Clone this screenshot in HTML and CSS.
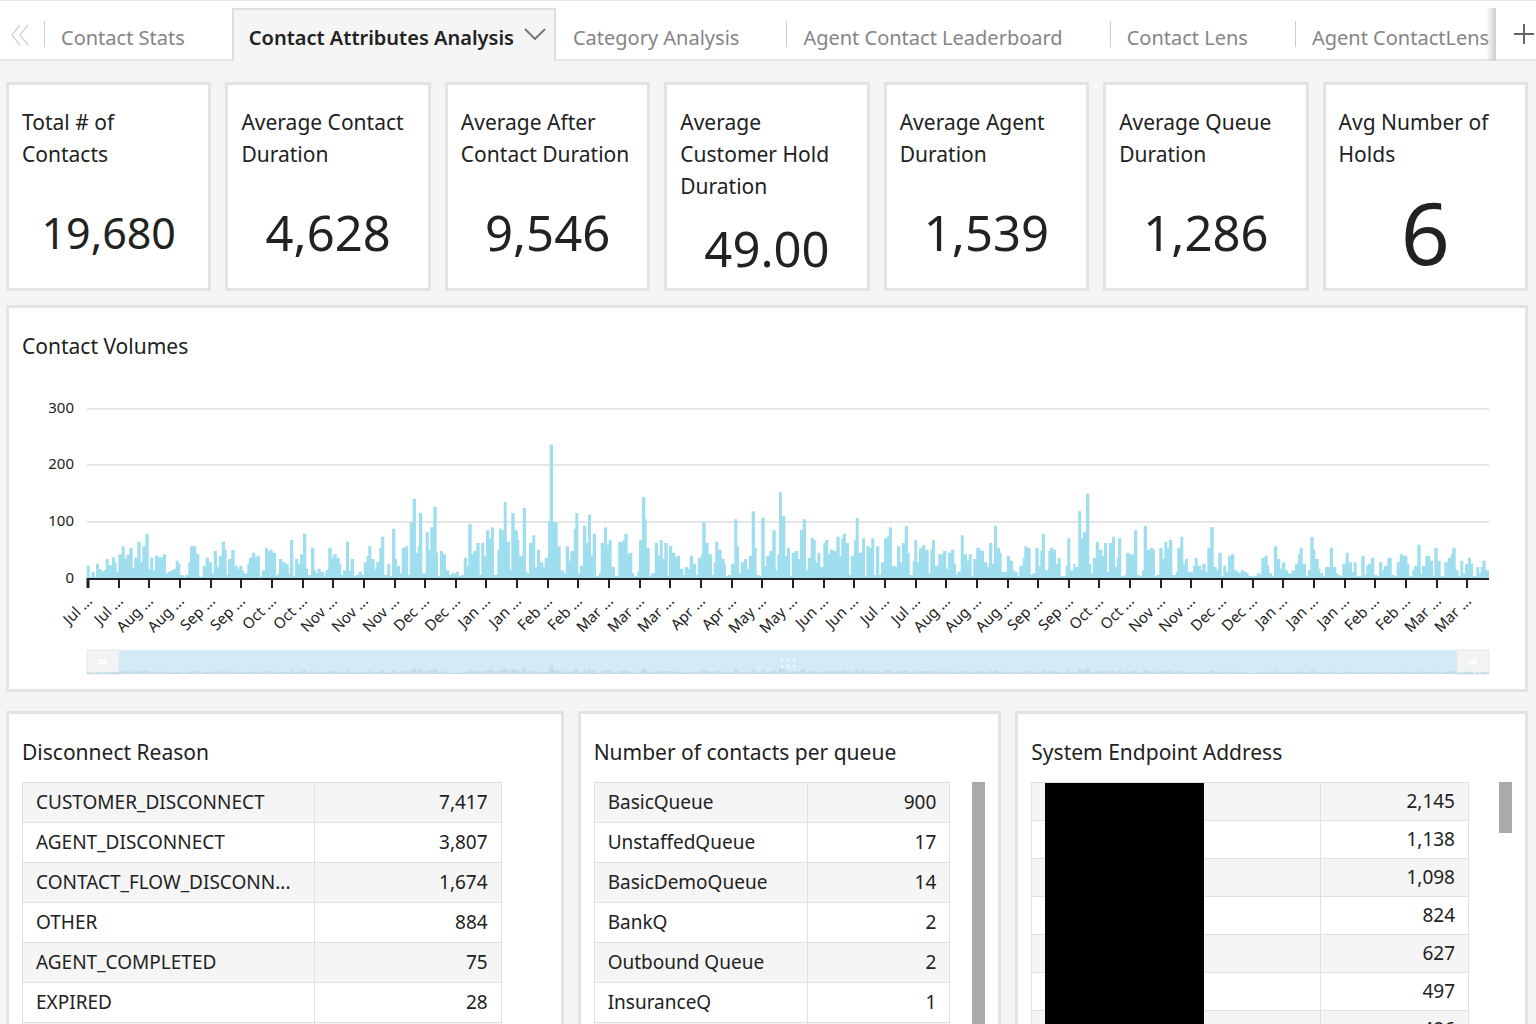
FILE: index.html
```html
<!DOCTYPE html>
<html lang="en">
<head>
  <meta charset="UTF-8" />
  <meta name="viewport" content="width=device-width, initial-scale=1.0"/>
  <title>Contact Attributes Analysis</title>
  <link rel="stylesheet" href="styles.css">
</head>
<body>
  <header class="topbar">
    <button class="scroll-tabs" aria-label="Scroll tabs left">
      <svg width="18" height="22" viewBox="0 0 18 22"><path d="M9 1 L1 11 L9 21 M17 1 L9 11 L17 21"/></svg>
    </button>
    <nav class="tabs">
      <button class="tab first">Contact Stats</button>
      <button class="tab active">Contact Attributes Analysis
        <svg width="22" height="12" viewBox="0 0 22 12"><path d="M1 1 L11 11 L21 1"/></svg>
      </button>
      <button class="tab no-line">Category Analysis</button>
      <button class="tab">Agent Contact Leaderboard</button>
      <button class="tab">Contact Lens</button>
      <button class="tab">Agent ContactLens Leaderboard</button>
    </nav>
    <button class="add-tab" aria-label="Add sheet">
      <svg width="22" height="22" viewBox="0 0 22 22"><path d="M11 1 V21 M1 11 H21"/></svg>
    </button>
  </header>

  <main>
    <section class="kpis">
      <div class="card kpi"><h2>Total # of Contacts</h2><p class="value small">19,680</p></div>
      <div class="card kpi"><h2>Average Contact Duration</h2><p class="value">4,628</p></div>
      <div class="card kpi"><h2>Average After Contact Duration</h2><p class="value">9,546</p></div>
      <div class="card kpi"><h2>Average Customer Hold Duration</h2><p class="value">49.00</p></div>
      <div class="card kpi"><h2>Average Agent Duration</h2><p class="value">1,539</p></div>
      <div class="card kpi"><h2>Average Queue Duration</h2><p class="value">1,286</p></div>
      <div class="card kpi"><h2>Avg Number of Holds</h2><p class="value big">6</p></div>
    </section>

    <section class="card volumes">
      <h2>Contact Volumes</h2>
      <svg id="chart" viewBox="0 0 1490 314">
        <g id="grid"></g>
        <path id="bars" class="bars"/>
        <path class="axis" d="M65 217 H1467"/>
        <g id="ticks"></g>
        <rect class="handle" x="65" y="288" width="32" height="24"/>
        <rect class="range" x="97" y="288" width="1338" height="24"/>
        <rect class="handle" x="1435" y="288" width="32" height="24"/>
        <path id="overview" class="overview"/>
        <path class="grip" d="M76 298.500 H85 M76 301.500 H85 M1446 298.500 H1455 M1446 301.500 H1455"/>
        <path class="grip dots" d="M759 298.500 H773 M759 304.500 H773"/>
      </svg>
    </section>

    <section class="tables">
      <div class="card">
        <h2>Disconnect Reason</h2>
        <div class="table-wrap reasons">
          <table>
            <colgroup><col class="name"><col></colgroup>
            <tr><td>CUSTOMER_DISCONNECT</td><td>7,417</td></tr>
            <tr><td>AGENT_DISCONNECT</td><td>3,807</td></tr>
            <tr><td>CONTACT_FLOW_DISCONN...</td><td>1,674</td></tr>
            <tr><td>OTHER</td><td>884</td></tr>
            <tr><td>AGENT_COMPLETED</td><td>75</td></tr>
            <tr><td>EXPIRED</td><td>28</td></tr>
            <tr><td></td><td></td></tr>
          </table>
        </div>
      </div>
      <div class="card">
        <h2>Number of contacts per queue</h2>
        <div class="table-wrap queues">
          <table>
            <colgroup><col class="name"><col></colgroup>
            <tr><td>BasicQueue</td><td>900</td></tr>
            <tr><td>UnstaffedQueue</td><td>17</td></tr>
            <tr><td>BasicDemoQueue</td><td>14</td></tr>
            <tr><td>BankQ</td><td>2</td></tr>
            <tr><td>Outbound Queue</td><td>2</td></tr>
            <tr><td>InsuranceQ</td><td>1</td></tr>
            <tr><td></td><td></td></tr>
          </table>
          <div class="thumb"></div>
        </div>
      </div>
      <div class="card">
        <h2>System Endpoint Address</h2>
        <div class="table-wrap endpoints">
          <table>
            <colgroup><col class="name"><col></colgroup>
            <tr><td></td><td>2,145</td></tr>
            <tr><td></td><td>1,138</td></tr>
            <tr><td></td><td>1,098</td></tr>
            <tr><td></td><td>824</td></tr>
            <tr><td></td><td>627</td></tr>
            <tr><td></td><td>497</td></tr>
            <tr><td></td><td>486</td></tr>
          </table>
          <div class="masked"></div>
          <div class="thumb short"></div>
        </div>
      </div>
    </section>
  </main>
  <script src="chart.js"></script>
</body>
</html>
```

FILE: styles.css
```css
* {
  box-sizing: border-box;
}
body {
  margin: 0;
  height: 100vh;
  overflow: hidden;
  background: #f5f5f5;
  color: #222;
  font-family: 'Noto Sans', 'Open Sans', sans-serif;
}
button {
  background: none;
  border: none;
  padding: 0;
  font: inherit;
  color: inherit;
  cursor: pointer;
}
h2, p {
  margin: 0;
}
svg {
  fill: none;
  flex: none;
}

/* sheet tabs */
.topbar {
  display: flex;
  height: 61px;
  padding-top: 8px;
  background: #fff;
  box-shadow: inset 0 1px #e5e5e5, inset 0 -2px #e5e5e5;
}
.scroll-tabs {
  width: 44px;
  padding-left: 11px;
  display: flex;
  align-items: center;
  stroke: #d5d5d5;
  stroke-width: 1.5;
}
.tabs {
  flex: 1;
  min-width: 0;
  display: flex;
  overflow: hidden;
  position: relative;
}
.tabs::after {
  content: "";
  position: absolute;
  right: 0;
  top: 0;
  bottom: 0;
  width: 10px;
  background: linear-gradient(to right, rgba(200, 200, 200, 0), #ccc);
}
.tab {
  flex: none;
  display: flex;
  align-items: center;
  padding: 5px 47px 0 0;
  font-size: 20px;
  color: #858585;
  white-space: nowrap;
}
.tab::before {
  content: "";
  width: 1px;
  height: 26px;
  margin: 0 16px 6px 0;
  background: #ccc;
}
.tab.active {
  padding: 3px 8px 0 15px;
  background: #f5f5f5;
  border: 2px solid #ddd;
  border-bottom: none;
  color: #222;
  font-weight: 600;
}
.tab.active::before, .tab.no-line::before {
  background: none;
}
.tab.active::before {
  display: none;
}
.tab.active svg {
  margin: 0 0 6px 10px;
  stroke: #777;
  stroke-width: 2;
}
.add-tab {
  width: 40px;
  padding: 0 1px 2px 0;
  display: flex;
  align-items: center;
  justify-content: flex-end;
  stroke: #666;
  stroke-width: 2;
}

/* cards */
main {
  padding: 21px 8px 0 6px;
}
.card {
  background: #fff;
  border: 3px solid #e3e3e3;
  padding: 22px 13px 13px;
}
h2 {
  font-size: 21px;
  line-height: 32px;
  font-weight: normal;
}
.kpis {
  display: grid;
  grid-template-columns: repeat(7, 1fr);
  gap: 14px;
}
.kpi {
  min-height: 209px;
  display: flex;
  flex-direction: column;
  padding-top: 21px;
  padding-bottom: 0;
}
.value {
  flex: 1;
  display: flex;
  align-items: center;
  justify-content: center;
  padding-top: 6px;
  font-size: 49px;
  line-height: 1;
}
.value.small {
  font-size: 43px;
}
.value.big {
  font-size: 86px;
}
.volumes {
  margin: 14px 0 19px;
}

/* chart */
#chart {
  display: block;
  width: 100%;
}
#chart text {
  font-size: 15px;
  fill: #222;
  text-anchor: end;
}
.grid-line {
  stroke: #e5e5e5;
  stroke-width: 2;
}
.bars {
  fill: #9fdeee;
}
.axis, .tick {
  stroke: #222;
  stroke-width: 2;
}
.tick.start {
  stroke-width: 3;
}
.handle {
  fill: #f3f3f3;
  stroke: #e8e8e8;
}
.range {
  fill: #d3ebf7;
}
.overview {
  fill: #c4dce6;
}
.grip {
  stroke: #fff;
  stroke-width: 2;
}
.grip.dots {
  stroke-dasharray: 2 4;
}

/* tables */
.tables {
  display: grid;
  grid-template-columns: 558fr 424fr 513fr;
  gap: 14px;
}
.table-wrap {
  display: flex;
  margin-top: 14px;
  position: relative;
}
table {
  flex: 1;
  table-layout: fixed;
  border-collapse: collapse;
  font-size: 19px;
  line-height: 24px;
}
td {
  height: 40px;
  padding: 0 13px 1px;
  border: 1px solid #e0e0e0;
  white-space: nowrap;
}
td:last-child {
  text-align: right;
}
tr:nth-child(odd) {
  background: #f5f5f5;
}
.reasons {
  padding-right: 46px;
}
.reasons .name {
  width: 61%;
}
.queues {
  gap: 22px;
}
.queues .name {
  width: 60%;
}
.endpoints {
  gap: 30px;
}
.endpoints .name {
  width: 66%;
}
.endpoints td {
  height: 38px;
}
.thumb {
  width: 13px;
  background: #aaa;
}
.thumb.short {
  height: 51px;
}
.masked {
  position: absolute;
  left: 14px;
  top: 1px;
  bottom: 0;
  width: 159px;
  background: #000;
}
```

FILE: chart.js
```js
// [start, [x, y, x, y, ...]] - each pair is where a bar starts and its top,
// three units to a pixel, axis at 565
const periods = [
  [0, [260,528,269,562,274,546,284,562,288,522,297,538,305,545,312,541,317,508,326,527,336,503,345,518,350,546,355,494,365,470,374,508,379,495,388,474,398,535,403,504,412,456,422,518,427,470,436,432,446,538,451,504,460,542,465,498,474,503,489,494,498,551,503,546,513,541,522,537,527,513,536,522,541,556,551,562,555,556,565,518,570,470,589,494,598,561,608,528,617,504,627,518,636,551,641,484,651,532,656,498,665,456,675,480,680,556,684,508,694,480,704,528,713,537,718,528,727,542,732,551,742,522,747,504,756,489,766,504,770,498,780,561,785,542,795,474,804,484,809,480,818,489,828,556,833,551,837,508,847,518,857,522,866,551,870,451,880,560,885,508,895,522,900,494,909,432,919,537,924,556,933,474,943,542,948,551,952,537,962,546,972,560,976,542,985,474,995,504,1000,494,1010,504,1019,522,1024,556,1029,542,1038,456,1047,542,1052,508,1062,560,1067,556,1076,546,1086,556,1091,518,1100,499,1105,470,1114,508,1124,537,1129,518,1138,474,1143,441,1153,556,1162,522,1171,560,1176,417,1186,508,1191,528]],
  [1200, [0,551,5,474,14,470,24,556,29,398,38,327,48,489,53,470,57,370,67,551,77,427,86,480,91,413,100,351,110,489,114,560,120,484,129,494,138,542,148,556,153,551,168,546,177,560,182,556,191,504,201,528,205,403,215,494,220,484,229,460,239,556,244,460,253,498,258,422,268,446,273,413,282,556,292,480,297,417,306,422,311,336,320,456,330,542,334,370,344,422,354,451,358,498,368,355,378,546,382,551,387,460,397,437,406,532,411,480,420,518,430,532,434,504,444,394,449,165,459,398,473,470,482,542,492,551,497,470,507,513,511,484,521,417,526,370,535,551,540,528,549,408,559,460,564,375,573,498,578,432,588,560,597,551,602,460,612,413,621,465,626,451,635,532,645,560,655,456,668,451,673,432,683,494,687,489,697,551,702,560,712,546,717,451,726,322,736,389,740,474,749,560,754,551,764,460,774,498,779,451,788,508,793,460,803,560,807,470,817,489,826,503,831,498,840,537,850,556,854,532,864,537,869,498,879,522,888,556,893,504,903,494,907,398,917,460,926,494,936,556,941,518,946,456,955,480,965,508,974,522,978,560,984,556,993,522,1003,389,1012,470,1017,551,1022,518,1032,508,1041,537]],
  [2250, [-4,498,5,365,15,474,20,556,29,560,34,384,44,528,49,498,58,484,67,422,77,542,82,494,87,308,96,380,106,498,111,474,120,560,125,489,135,484,145,508,150,422,158,389,168,542,173,504,182,446,192,451,197,518,202,489,211,532,220,460,225,451,235,494,240,480,250,484,259,441,269,498,274,446,278,432,288,460,297,556,302,498,312,451,317,384,326,489,336,446,345,560,349,470,359,474,364,446,373,556,378,470,388,556,393,518,402,446,412,437,417,413,426,528,437,532,441,470,451,518,456,460,464,408,474,489,479,556,488,513,493,451,502,518,507,474,517,465,526,480,536,551,541,480,546,451,555,528,565,494,579,484,589,537,594,489,603,480,613,522,618,556,622,546,632,437,641,494,651,513,656,494,665,560,670,508,679,474,690,480,694,484,702,518,712,532,717,460,727,522,732,408,741,474,750,489,755,546,770,498,780,513,789,542,794,546,803,560,808,528,818,504,823,470,832,474,842,556,847,551,856,474,866,528,871,484,875,432,885,542,895,484,900,474,909,480,918,522,923,504,932,560,947,528,952,446,961,542,970,522,976,532,985,365,994,446,999,427,1008,312,1018,522,1023,551,1028,504,1037,456,1047,480,1057,498]],
  [3300, [12,460,21,546,26,460,36,441,45,532,50,503,54,446,64,560,73,556,78,489,88,494,102,422,112,556,120,560,126,542,131,408,141,480,150,474,160,480,165,560,168,556,178,474,188,508,193,456,202,474,207,451,217,556,227,546,232,474,241,441,250,522,255,508,264,546,279,528,284,504,293,528,303,542,307,522,317,546,322,474,331,413,341,532,350,542,355,489,365,560,370,528,379,546,384,498,393,494,403,542,412,546,417,551,422,542,432,546,441,551,446,560,470,551,480,556,484,504,494,498,503,528,508,551,517,560,522,470,532,508,541,537,546,518,556,542,565,551,575,542,585,522,594,494,599,474,608,522,618,560,623,542,631,441,641,480,646,508,656,537,661,551,670,560,675,532,689,474,699,532,709,551,714,556,722,560,727,522,737,489,746,518,756,546,761,518,770,560,784,498,794,556,799,528,804,522,813,504,823,556,832,560,837,518,847,542,852,528,862,504,875,556,885,560,890,518,899,494,909,498,922,522,928,560,937,542,942,528,952,465,962,551,966,528,976,498,990,513,999,560,1003,474,1013,513,1022,560,1033,518,1043,504,1053,494,1057,474,1067,542,1076,560,1081,513,1090,551,1095,522,1104,504,1113,522,1119,560,1129,532,1138,551,1142,532,1147,513,1157,542,1167,565]]
];

const months = ['Jul', 'Jul', 'Aug', 'Aug', 'Sep', 'Sep', 'Oct', 'Oct', 'Nov', 'Nov', 'Nov', 'Dec', 'Dec',
  'Jan', 'Jan', 'Feb', 'Feb', 'Mar', 'Mar', 'Mar', 'Apr', 'Apr', 'May', 'May', 'Jun', 'Jun', 'Jul', 'Jul',
  'Aug', 'Aug', 'Aug', 'Sep', 'Sep', 'Oct', 'Oct', 'Nov', 'Nov', 'Dec', 'Dec', 'Jan', 'Jan', 'Jan',
  'Feb', 'Feb', 'Mar', 'Mar'];

// outline of all the bars, standing on the line y = base
function outline(base, scale) {
  let d = `M65 ${base}`;
  periods.forEach(([start, points]) => {
    for (let i = 0; i < points.length; i += 2) {
      const x = (start + points[i]) / 3 - 22;
      const y = base - (565 - points[i + 1]) / 3 * scale;
      d += `H${x.toFixed(1)}V${y.toFixed(1)}`;
    }
  });
  return d + 'Z';
}

document.getElementById('bars').setAttribute('d', outline(216, 1));
document.getElementById('overview').setAttribute('d', outline(311, 0.06) + 'M65 311H1467V312H65Z');

document.getElementById('grid').innerHTML = [300, 200, 100, 0].map((n, i) => {
  const y = [47, 103, 160, 217][i];
  const line = n ? `<path class="grid-line" d="M65 ${y} H1467"/>` : '';
  return `${line}<text x="52" y="${y + 4}">${n}</text>`;
}).join('');

document.getElementById('ticks').innerHTML = months.map((m, i) => {
  const x = Math.round(66 + i * 30.65);
  return `<path class="tick${i ? '' : ' start'}" d="M${x} 216 V226"/>
    <text transform="translate(${x + 5} 240) rotate(-45)">${m} ...</text>`;
}).join('');
```
